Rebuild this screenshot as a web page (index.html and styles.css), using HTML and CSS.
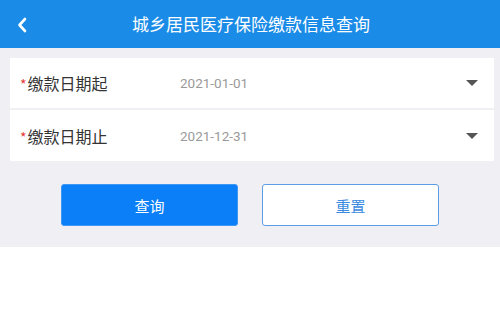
FILE: index.html
```html
<!DOCTYPE html>
<html lang="zh">
<head>
<meta charset="utf-8">
<link rel="stylesheet" href="styles.css">
</head>
<body>
<div class="page">
  <header class="nav">
    <svg class="back" width="10" height="16" viewBox="0 0 10 16"><path d="M8 2 L2.5 8 L8 14" fill="none" stroke="#fff" stroke-width="2.6" stroke-linecap="round" stroke-linejoin="round"/></svg>
    <h1 class="title">城乡居民医疗保险缴款信息查询</h1>
  </header>
  <main class="content">
    <section class="form">
      <div class="row">
        <span class="label"><span class="req">*</span>缴款日期起</span>
        <span class="value">2021-01-01</span>
        <span class="caret"></span>
      </div>
      <div class="row">
        <span class="label"><span class="req">*</span>缴款日期止</span>
        <span class="value">2021-12-31</span>
        <span class="caret"></span>
      </div>
    </section>
    <div class="actions">
      <button class="btn primary">查询</button>
      <button class="btn outline">重置</button>
    </div>
  </main>
</div>
</body>
</html>
```
FILE: styles.css
```css
* { box-sizing: border-box; }
html, body { margin: 0; padding: 0; background: #fff; }
body { font-family: "Noto Sans CJK SC", Roboto, sans-serif; }
.page { width: 500px; }
.nav {
  height: 48px;
  background: #1a8be6;
  display: flex;
  align-items: center;
  justify-content: center;
  position: relative;
}
.back { position: absolute; left: 17px; top: 17px; }
.title {
  margin: 0 0 1px 2px;
  color: #fff;
  font-size: 17px;
  font-weight: 400;
}
.content {
  background: #efeff4;
  padding: 10px 6px 21px 10px;
}
.form {
  display: flex;
  flex-direction: column;
  gap: 2px;
}
.row {
  height: 50px;
  background: #fff;
  display: flex;
  align-items: center;
  padding: 0 16px 0 10px;
}
.row + .row { height: 51px; }
.label {
  width: 160px;
  font-size: 16px;
  color: #333;
}
.req { color: #e53935; font-size: 14px; margin-right: 1px; }
.value {
  flex: 1;
  font-family: Roboto, sans-serif;
  font-size: 13.5px;
  color: #9a9a9a;
}
.caret {
  width: 0; height: 0;
  border-left: 6px solid transparent;
  border-right: 6px solid transparent;
  border-top: 6px solid #555;
}
.actions {
  display: flex;
  gap: 24px;
  padding: 23px 0 0 51px;
}
.btn {
  width: 177px;
  height: 42px;
  border-radius: 3px;
  font-family: "Noto Sans CJK SC", sans-serif;
  font-size: 15px;
  padding: 0;
}
.primary { background: #0a7ff7; border: 1px solid #3d97f5; color: #fff; }
.outline { background: #fff; border: 1.5px solid #5b9ee6; color: #3a8be0; }
```
